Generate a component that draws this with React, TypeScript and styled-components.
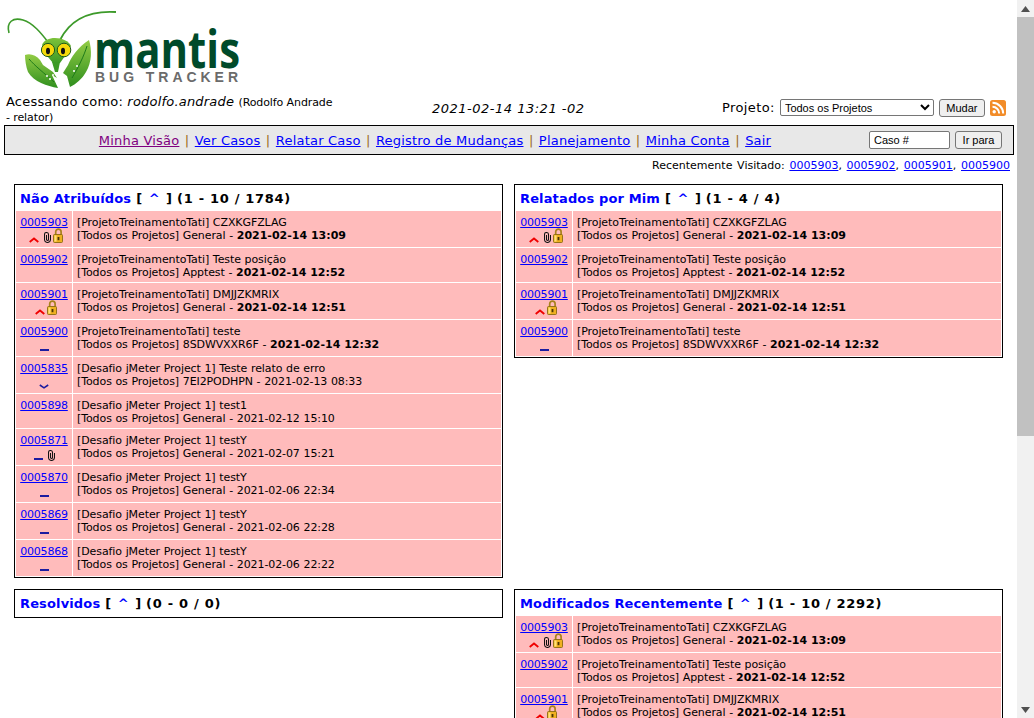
import React from "react";
import styled, { createGlobalStyle } from "styled-components";

const Global = createGlobalStyle`
  html, body { margin: 0; padding: 0; height: 100%; overflow: hidden; background: #fff; }
  body { font-family: "DejaVu Sans", Verdana, sans-serif; font-size: 11px; color: #000; }
  a { color: #0000ff; }
`;

const Shell = styled.div`display: flex; width: 1034px; height: 718px; overflow: hidden;`;
const Page = styled.div`width: 1017px; height: 718px; overflow: hidden; flex: none;`;

const Bar = styled.div`width: 17px; flex: none; background: #f1f1f1; display: flex; flex-direction: column; height: 718px;`;
const BarButton = styled.div`height: 17px; flex: none; display: flex; align-items: center; justify-content: center;`;
const BarThumb = styled.div`height: 419px; flex: none; background: #c1c1c1;`;
const BarSpace = styled.div`flex: 1;`;

const LogoRow = styled.div`height: 95px;`;

const InfoRow = styled.div`display: flex; height: 30px; padding-left: 6px; align-items: flex-start;`;
const UserCell = styled.div`width: 330px; font-size: 13px; line-height: 14px; letter-spacing: 0.2px; flex: none;`;
const UserSmall = styled.span`font-size: 11px; letter-spacing: -0.1px;`;
const TimeCell = styled.div`width: 386px; flex: none; font-size: 13px; font-style: italic; line-height: 14px; padding: 7px 0 0 96px; box-sizing: border-box; letter-spacing: 0.5px;`;
const ProjectCell = styled.div`display: flex; align-items: center; height: 17px; margin-top: 4px; font-size: 13px; white-space: nowrap;`;
const ProjectLabel = styled.span`margin-right: 5px; letter-spacing: 0.4px;`;
const ProjectSelect = styled.select`
  width: 154px; height: 17px; font: 11px "Liberation Sans", Arial, sans-serif; padding: 0;
  border: 1px solid #767676; border-radius: 2px; background: #fff; color: #000; box-sizing: border-box;
`;
const Btn = styled.button<{ $w: number; $ml: number }>`
  width: ${(p) => p.$w}px; margin-left: ${(p) => p.$ml}px; height: 18px; padding: 0; flex: none;
  font: 11px "Liberation Sans", Arial, sans-serif; color: #000; background: #efefef;
  border: 1px solid #767676; border-radius: 3px;
`;
const Rss = styled.svg`margin-left: 5px; flex: none;`;

const Nav = styled.div`
  margin-left: 4px; width: 1010px; height: 30px; box-sizing: border-box; border: 1px solid #000; background: #e8e8e8;
  display: flex; align-items: center; font-size: 13px;
`;
const NavLinks = styled.div`width: 864px; padding-right: 4px; box-sizing: border-box; text-align: center; flex: none; letter-spacing: 0.2px; white-space: nowrap;`;
const NavLink = styled.a<{ $visited?: boolean }>`color: ${(p) => (p.$visited ? "#800080" : "#0000ff")};`;
const Pipe = styled.span`color: #9a6a20; margin: 0 5.4px;`;
const CaseInput = styled.input`
  width: 81px; height: 18px; box-sizing: border-box; border: 1px solid #767676; border-radius: 2px; padding: 0 4px;
  font: 11px "Liberation Sans", Arial, sans-serif; color: #000; background: #fff;
  &::placeholder { color: #000; opacity: 1; }
`;

const Recent = styled.div`margin-top: 2px; height: 18px; line-height: 18px; text-align: right; width: 1010px; font-size: 11px; word-spacing: 1.2px;`;

const Columns = styled.div`display: grid; grid-template-columns: 489px 489px; column-gap: 11px; padding: 9px 0 0 14px; align-items: start; row-gap: 11px;`;

const Box = styled.div`border: 1px solid #000; padding: 0 1px 1px; background: #fff; box-sizing: border-box;`;
const BoxHead = styled.div`height: 26px; padding-left: 4px; display: flex; align-items: center; font-size: 13px; font-weight: bold; white-space: nowrap;`;
const BoxTitle = styled.a`color: #0000ff; text-decoration: none; margin-right: 5px; letter-spacing: 0.14px;`;
const Caret = styled.a`color: #0000ff; text-decoration: none; margin: 0 6.5px;`;
const Counts = styled.span`margin-left: 5px; letter-spacing: 0.7px;`;
const Rows = styled.div`display: flex; flex-direction: column; gap: 1px;`;
const Row = styled.div`display: flex; gap: 1px;`;
const IdCell = styled.div`width: 56px; flex: none; background: #ffbbbb; text-align: center; padding: 5px 0 4px; box-sizing: border-box;`;
const IdLink = styled.a`display: block; line-height: 13px; letter-spacing: -0.2px;`;
const DescCell = styled.div`flex: 1; background: #ffbbbb; padding: 5px 0 3px 4px; line-height: 13px; white-space: nowrap; letter-spacing: -0.09px; word-spacing: 0.3px;`;
const Stamp = styled.b`letter-spacing: 0; word-spacing: 0;`;
const Icons = styled.div`height: 14px; display: flex; align-items: flex-end; justify-content: center;`;
const ClipIcon = styled.svg`margin-left: 5px; flex: none;`;
const LockIcon = styled.svg`margin: 0 -4px 0 2px; flex: none;`;
const DashIcon = styled.svg`margin-bottom: 1px; flex: none;`;

const Up = () => (
  <svg width="10" height="6" viewBox="0 0 10 6"><path d="M.7 5 5 1.5 9.3 5" fill="none" stroke="#f00000" strokeWidth="1.8" /></svg>
);
const Dash = () => (
  <DashIcon width="9" height="2" viewBox="0 0 9 2"><rect width="9" height="2" fill="#1c1ca0" /></DashIcon>
);
const Down = () => (
  <svg width="10" height="5" viewBox="0 0 10 5"><path d="M.8 1 5 3.8 9.2 1" fill="none" stroke="#1c1ca0" strokeWidth="1.6" /></svg>
);
const Clip = () => (
  <ClipIcon width="7" height="11" viewBox="0 0 7 11">
    <path d="M6.5 3v4.5a3 3 0 0 1-6 0V2.5a2 2 0 0 1 4 0V7.5a1 1 0 0 1-2 0V3" fill="none" stroke="#111" strokeWidth="1.05" />
  </ClipIcon>
);
const Lock = () => (
  <LockIcon width="10" height="15" viewBox="0 0 10 15">
    <path d="M2.7 7.5V3.8a2.7 2.7 0 0 1 5.4 0v3.7" fill="none" stroke="#a8821c" strokeWidth="1.7" />
    <rect x="0.5" y="6.5" width="9" height="8" rx="1" fill="#efb020" stroke="#8a6a10" strokeWidth="0.9" />
    <rect x="1.5" y="7.5" width="2" height="6" fill="#ffe27a" />
    <rect x="4.6" y="9" width="1.8" height="3.2" fill="#4a3606" />
  </LockIcon>
);

type Item = { id: string; p1: string; p2: string; when: string; bold?: boolean; pri?: "up" | "dash" | "down"; clip?: boolean; lock?: boolean };

const T = "[ProjetoTreinamentoTati]";
const D = "[Desafio jMeter Project 1]";
const a1: Item = { id: "0005903", p1: `${T} CZXKGFZLAG`, p2: "General", when: "2021-02-14 13:09", bold: true, pri: "up", clip: true, lock: true };
const a2: Item = { id: "0005902", p1: `${T} Teste posição`, p2: "Apptest", when: "2021-02-14 12:52", bold: true };
const a3: Item = { id: "0005901", p1: `${T} DMJJZKMRIX`, p2: "General", when: "2021-02-14 12:51", bold: true, pri: "up", lock: true };
const a4: Item = { id: "0005900", p1: `${T} teste`, p2: "8SDWVXXR6F", when: "2021-02-14 12:32", bold: true, pri: "dash" };

const unassigned: Item[] = [
  a1, a2, a3, a4,
  { id: "0005835", p1: `${D} Teste relato de erro`, p2: "7EI2PODHPN", when: "2021-02-13 08:33", pri: "down" },
  { id: "0005898", p1: `${D} test1`, p2: "General", when: "2021-02-12 15:10" },
  { id: "0005871", p1: `${D} testY`, p2: "General", when: "2021-02-07 15:21", pri: "dash", clip: true },
  { id: "0005870", p1: `${D} testY`, p2: "General", when: "2021-02-06 22:34", pri: "dash" },
  { id: "0005869", p1: `${D} testY`, p2: "General", when: "2021-02-06 22:28", pri: "dash" },
  { id: "0005868", p1: `${D} testY`, p2: "General", when: "2021-02-06 22:22", pri: "dash" },
];

const IssueRow = ({ it }: { it: Item }) => (
  <Row>
    <IdCell>
      <IdLink href="#">{it.id}</IdLink>
      {(it.pri || it.clip || it.lock) && (
        <Icons>
          {it.pri === "up" && <Up />}
          {it.pri === "dash" && <Dash />}
          {it.pri === "down" && <Down />}
          {it.clip && <Clip />}
          {it.lock && <Lock />}
        </Icons>
      )}
    </IdCell>
    <DescCell>
      {it.p1}
      <br />
      [Todos os Projetos] {it.p2} - {it.bold ? <Stamp>{it.when}</Stamp> : it.when}
    </DescCell>
  </Row>
);

const Panel = ({ title, counts, items }: { title: string; counts: string; items: Item[] }) => (
  <Box>
    <BoxHead>
      <BoxTitle href="#">{title}</BoxTitle>[<Caret href="#">^</Caret>]<Counts>({counts})</Counts>
    </BoxHead>
    {items.length > 0 && (
      <Rows>
        {items.map((it) => (
          <IssueRow key={it.id} it={it} />
        ))}
      </Rows>
    )}
  </Box>
);

const Logo = () => (
  <svg width="250" height="95" viewBox="0 0 250 95" aria-label="Mantis Bug Tracker">
    <defs>
      <linearGradient id="leaf" x1="0" y1="0" x2="0" y2="1">
        <stop offset="0" stopColor="#93cc45" />
        <stop offset="1" stopColor="#2f8f1e" />
      </linearGradient>
      <linearGradient id="head" x1="0" y1="0" x2="0" y2="1">
        <stop offset="0" stopColor="#7cc23a" />
        <stop offset="1" stopColor="#3c9a26" />
      </linearGradient>
    </defs>
    <path d="M9 33C6 22 13 17 23 20 33 23 41 33 48 42" fill="none" stroke="#3d9a2a" strokeWidth="1.6" />
    <path d="M60 40C68 24 84 10 116 12" fill="none" stroke="#3d9a2a" strokeWidth="1.8" />
    <path d="M25 55C30 53 36 55 40 60L43 65 53 72 57 78 52 75 58 88C47 86 34 82 28 72 26 67 25 60 25 55Z" fill="url(#leaf)" />
    <path d="M89 40C92 50 92 62 86 72 82 79 76 84 70 87L67 76 63 73 68 65C71 57 78 47 89 40Z" fill="url(#leaf)" />
    <path d="M29 59C35 66 44 73 54 82M87 46C84 56 78 68 72 78" stroke="#1e7a1a" strokeWidth="1" fill="none" />
    <circle cx="47" cy="76" r="1" fill="#fff" />
    <circle cx="50" cy="79" r="1" fill="#fff" />
    <circle cx="53" cy="75" r="1" fill="#fff" />
    <circle cx="74" cy="71" r="1" fill="#fff" />
    <circle cx="77" cy="66" r="1" fill="#fff" />
    <path d="M42 45C44 40 49 38 55 38 62 38 69 41 71 46L65 56 60 63 53 63 48 57Z" fill="url(#head)" />
    <path d="M52 62 60 62 58 72 55 72Z" fill="#3c9a26" />
    <circle cx="48" cy="50" r="6.6" fill="#f5d90a" stroke="#1d5a1a" strokeWidth="1" />
    <circle cx="64" cy="50" r="6.8" fill="#f5d90a" stroke="#1d5a1a" strokeWidth="1" />
    <ellipse cx="48" cy="51" rx="2" ry="3.2" fill="#111" />
    <ellipse cx="63" cy="51" rx="2" ry="3.2" fill="#111" />
    <text x="94" y="68" fontFamily="'Open Sans','Lato',sans-serif" fontWeight="700" fontSize="52" fill="#004a2a" textLength="146" lengthAdjust="spacingAndGlyphs">mantis</text>
    <text x="95" y="82" fontFamily="'Liberation Sans',sans-serif" fontWeight="700" fontSize="14" fill="#6b6b6b" textLength="143" lengthAdjust="spacing">BUG TRACKER</text>
  </svg>
);

export default function App() {
  return (
    <Shell>
      <Global />
      <Page>
        <LogoRow>
          <Logo />
        </LogoRow>
        <InfoRow>
          <UserCell>
            Acessando como: <i>rodolfo.andrade</i> <UserSmall>(Rodolfo Andrade - relator)</UserSmall>
          </UserCell>
          <TimeCell>2021-02-14 13:21 -02</TimeCell>
          <ProjectCell>
            <ProjectLabel>Projeto:</ProjectLabel>
            <ProjectSelect defaultValue="all">
              <option value="all">Todos os Projetos</option>
            </ProjectSelect>
            <Btn $w={46} $ml={5}>Mudar</Btn>
            <Rss width="16" height="16" viewBox="0 0 16 16">
              <rect width="16" height="16" rx="2.5" fill="#f28c28" />
              <circle cx="4.2" cy="11.8" r="1.7" fill="#fff" />
              <path d="M2.5 6.8a6.7 6.7 0 0 1 6.7 6.7M2.5 2.8a10.7 10.7 0 0 1 10.7 10.7" fill="none" stroke="#fff" strokeWidth="2" />
            </Rss>
          </ProjectCell>
        </InfoRow>
        <Nav>
          <NavLinks>
            <NavLink href="#" $visited>Minha Visão</NavLink><Pipe>|</Pipe>
            <NavLink href="#">Ver Casos</NavLink><Pipe>|</Pipe>
            <NavLink href="#">Relatar Caso</NavLink><Pipe>|</Pipe>
            <NavLink href="#">Registro de Mudanças</NavLink><Pipe>|</Pipe>
            <NavLink href="#">Planejamento</NavLink><Pipe>|</Pipe>
            <NavLink href="#">Minha Conta</NavLink><Pipe>|</Pipe>
            <NavLink href="#">Sair</NavLink>
          </NavLinks>
          <CaseInput placeholder="Caso #" />
          <Btn $w={47} $ml={5}>Ir para</Btn>
        </Nav>
        <Recent>
          Recentemente Visitado: <a href="#">0005903</a>, <a href="#">0005902</a>, <a href="#">0005901</a>, <a href="#">0005900</a>
        </Recent>
        <Columns>
          <Panel title="Não Atribuídos" counts="1 - 10 / 1784" items={unassigned} />
          <Panel title="Relatados por Mim" counts="1 - 4 / 4" items={[a1, a2, a3, a4]} />
          <Panel title="Resolvidos" counts="0 - 0 / 0" items={[]} />
          <Panel title="Modificados Recentemente" counts="1 - 10 / 2292" items={[a1, a2, a3, a4]} />
        </Columns>
      </Page>
      <Bar>
        <BarButton>
          <svg width="9" height="6" viewBox="0 0 9 6"><path d="M4.5 0 9 6H0Z" fill="#505050" /></svg>
        </BarButton>
        <BarThumb />
        <BarSpace />
        <BarButton>
          <svg width="9" height="6" viewBox="0 0 9 6"><path d="M4.5 6 9 0H0Z" fill="#505050" /></svg>
        </BarButton>
      </Bar>
    </Shell>
  );
}
